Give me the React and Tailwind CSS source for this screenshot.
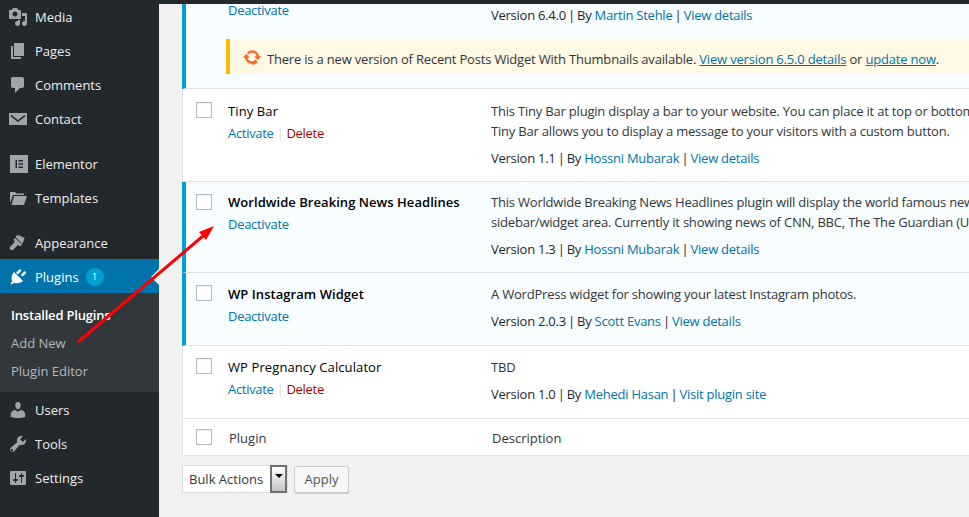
import React from "react";

const P = {
  media: "M13 11V4c0-.55-.45-1-1-1h-1.670L9 1H5L3.670 3H2c-.55 0-1 .45-1 1v7c0 .55.45 1 1 1h10c.55 0 1-.45 1-1zM7 4.500c1.380 0 2.500 1.120 2.500 2.500S8.380 9.500 7 9.500 4.500 8.380 4.500 7 5.620 4.500 7 4.500zM14 6h5v10.500c0 1.380-1.120 2.500-2.500 2.500S14 17.880 14 16.500s1.120-2.500 2.500-2.500c.17 0 .34.020.5.050V9h-3V6zm-4 8.050V13h2v3.500c0 1.380-1.120 2.500-2.500 2.500S7 17.880 7 16.500 8.120 14 9.500 14c.17 0 .34.020.5.050z",
  pages: "M6 15V2h10v13H6zm-1 1h8v2H3V5h2v11z",
  comments: "M5 2h9c1.100 0 2 .9 2 2v7c0 1.100-.9 2-2 2h-2l-5 5v-5H5c-1.100 0-2-.9-2-2V4c0-1.100.9-2 2-2z",
  contact: "M1 4h18v12H1V4zm2.500 2L2.500 7.200 10 13l7.500-5.800L16.500 6 10 11 3.500 6z",
  elementor: "M2 1h18v18H2V1zm5.500 5v8h1.500V6H7.500zm3 0v1.500h4.500V6h-4.500zm0 3.200v1.500h4.500V9.200h-4.500zm0 3.300V14h4.500v-1.500h-4.500z",
  templates: "M2 15V4h5l1.500 1.500H16V7H5L2 15zm1.500 2L6 8h13l-3 9H3.500z",
  appearance: "M14.480 11.060L7.410 3.990l1.500-1.500c.5-.56 2.300-.47 3.510.32 1.210.8 1.430 1.280 2.660 1.510 1.230.22 1.590.17 1.590.17l-2.190 6.570zM13.780 11.760l-.7.700-.7.700-1.400-.7-1.100-.5-4.500 4.500c-.84.84-2.200.84-3.030 0s-.84-2.190 0-3.030l4.500-4.500-.5-1.100-.7-1.400.7-.7.7-.7 7.230 6.730z",
  plugins: "M13.110 4.360L9.870 7.600 8 5.730l3.240-3.240c.35-.34 1.050-.2 1.560.32.52.51.66 1.210.31 1.550zm-8 1.770l.91-1.120 9.010 9.010-1.190.84c-1.530 1.110-3.260 1.390-4.940 1.390-1.260 0-2.160-.1-3.080-.59L3.790 17.500 2.500 16.210l1.840-2.040c-.38-.81-.76-1.730-.76-3.080 0-1.690.4-3.400 1.530-4.960zM18 6.270l-3.240 3.240-1.870-1.870 3.240-3.240c.34-.35 1.040-.21 1.550.31.52.51.66 1.210.32 1.560z",
  users: "M10 9.250c-2.270 0-2.730-3.440-2.730-3.440C7 4.020 7.820 2 9.970 2c2.160 0 2.980 2.020 2.710 3.810 0 0-.41 3.440-2.680 3.440zm0 2.570L12.720 10c2.390 0 4.520 2.330 4.520 4.530v2.490s-3.650 1.130-7.240 1.130c-3.650 0-7.240-1.130-7.240-1.130v-2.490c0-2.250 1.940-4.480 4.470-4.480z",
  tools: "M16.680 9.770c-1.340 1.340-3.300 1.670-4.950.99l-5.410 6.520c-.99.99-2.590.99-3.570 0-.99-.98-.99-2.580 0-3.570l6.520-5.420c-.68-1.650-.35-3.610.99-4.950 1.280-1.280 3.120-1.620 4.720-1.060l-2.890 2.890 2.820 2.820 2.860-2.870c.53 1.590.18 3.400-1.090 4.670zM4.860 17.070c.49-.49.49-1.280 0-1.770-.49-.49-1.280-.49-1.770 0-.49.49-.49 1.280 0 1.770.49.49 1.280.49 1.770 0z",
  settings: "M18 16V4c0-.55-.45-1-1-1H3c-.55 0-1 .45-1 1v12c0 .55.45 1 1 1h14c.55 0 1-.45 1-1zM8 11h1c.55 0 1 .45 1 1s-.45 1-1 1H8v1.500c0 .28-.22.5-.5.5s-.5-.22-.5-.5V13H6c-.55 0-1-.45-1-1s.45-1 1-1h1V5.500c0-.28.22-.5.5-.5s.5.22.5.5V11zm5-2h-1c-.55 0-1-.45-1-1s.45-1 1-1h1V5.500c0-.28.22-.5.5-.5s.5.22.5.5V7h1c.55 0 1 .45 1 1s-.45 1-1 1h-1v5.500c0 .28-.22.5-.5.5s-.5-.22-.5-.5V9z",
  update: "M10.200 3.280c3.530 0 6.430 2.610 6.920 6h2.080l-3.500 4-3.500-4h2.320c-.45-1.970-2.210-3.440-4.320-3.440-1.450 0-2.730.71-3.540 1.780L4.950 5.660C6.230 4.200 8.110 3.280 10.200 3.280zm-.4 13.440c-3.520 0-6.430-2.610-6.920-6H.8l3.500-4c1.170 1.330 2.330 2.670 3.500 4H5.480c.45 1.970 2.210 3.440 4.320 3.440 1.450 0 2.730-.71 3.540-1.780l2.440 2.980c-1.280 1.460-3.160 2.380-5.280 2.360z",
};

function Icon({ name, className }) {
  return (
    <svg viewBox="0 0 20 20" className={className} fill="currentColor" fillRule="evenodd" aria-hidden="true">
      <path d={P[name]} />
    </svg>
  );
}

function MenuItem({ icon, label, active, badge, mt }) {
  return (
    <div
      className={`relative flex h-[34px] items-center ${mt ? "mt-[11px]" : ""} ${active ? "-mt-px bg-[#0073aa] pt-px text-white" : "text-[#eeeeee]"}`}
    >
      <span className={`flex w-[35px] justify-center pl-[1px] ${active ? "text-white" : "text-[#a0a5aa]"}`}>
        <Icon name={icon} className="h-5 w-5" />
      </span>
      <span className="text-[13px] leading-[18px]">{label}</span>
      {badge && (
        <span className="ml-[7px] flex h-[18px] w-[18px] items-center justify-center rounded-full bg-[#00a0d2] text-[9px] text-white">
          {badge}
        </span>
      )}
      {active && (
        <span className="absolute right-0 top-[10px] h-0 w-0 border-y-[8px] border-r-[8px] border-y-transparent border-r-[#f1f1f1]" />
      )}
    </div>
  );
}

function Sidebar() {
  return (
    <aside className="h-full w-[159px] shrink-0 bg-[#23282d]">
      <MenuItem icon="media" label="Media" />
      <MenuItem icon="pages" label="Pages" />
      <MenuItem icon="comments" label="Comments" />
      <MenuItem icon="contact" label="Contact" />
      <MenuItem icon="elementor" label="Elementor" mt />
      <MenuItem icon="templates" label="Templates" />
      <MenuItem icon="appearance" label="Appearance" mt />
      <MenuItem icon="plugins" label="Plugins" active badge="1" />
      <div className="h-[99px] bg-[#32373c] pt-2 text-[13px] leading-[28px]">
        <div className="pl-[11px] font-semibold tracking-[-0.2px] text-white">Installed Plugins</div>
        <div className="pl-[11px] text-[#b4b9be]">Add New</div>
        <div className="pl-[11px] text-[#b4b9be]">Plugin Editor</div>
      </div>
      <div className="h-[1px]" />
      <MenuItem icon="users" label="Users" />
      <MenuItem icon="tools" label="Tools" />
      <MenuItem icon="settings" label="Settings" />
    </aside>
  );
}

function Check() {
  return <span className="block h-4 w-4 border border-[#b4b9be] bg-white shadow-[inset_0_1px_2px_rgba(0,0,0,0.07)]" />;
}

function Sep() {
  return <span className="mx-[-1px]"> | </span>;
}

function Meta({ version, by, link, tight }) {
  return (
    <div className={`whitespace-nowrap tracking-[-0.25px] text-[#23282d] ${tight ? "mt-[7px]" : "mt-2"}`}>
      Version {version}
      <Sep />
      By <a className="text-[#0073aa]">{by}</a>
      <Sep />
      <a className="text-[#0073aa]">{link}</a>
    </div>
  );
}

function Row({ active, name, actions, desc, version, by, link, h, pt, tight, checkPt }) {
  return (
    <div
      className={`flex border-b border-[#e1e1e1] text-[13px] leading-[19.5px] ${
        active ? "border-l-4 border-l-[#00a0d2] bg-[#f7fcfe]" : "border-l border-l-[#e5e5e5] bg-white"
      } ${h} ${pt}`}
    >
      <div className={`shrink-0 ${checkPt || ""} ${active ? "w-[42px] pl-[10px]" : "w-[45px] pl-[13px]"}`}>
        <Check />
      </div>
      <div className="w-[263px] shrink-0">
        <div className={active ? "font-semibold tracking-[0.05px] text-black" : "tracking-[0.1px] text-black"}>{name}</div>
        <div className="mt-[2px] tracking-[-0.3px]">
          {actions === "deactivate" ? (
            <a className="text-[#0073aa]">Deactivate</a>
          ) : (
            <>
              <a className="text-[#0073aa]">Activate</a>
              <span className="mx-[3px] text-[#dddddd]">|</span>
              <a className="text-[#aa0000]">Delete</a>
            </>
          )}
        </div>
      </div>
      <div className="min-w-0 flex-1 overflow-hidden whitespace-nowrap tracking-[-0.2px] text-[#32373c]">
        {desc.map((d) => (
          <div key={d}>{d}</div>
        ))}
        <Meta version={version} by={by} link={link} tight={tight} />
      </div>
    </div>
  );
}

function Table() {
  return (
    <div className="ml-[23px]">
      <div className="h-[85px] overflow-hidden border-b border-[#e1e1e1] border-l-4 border-l-[#00a0d2] bg-[#f7fcfe] text-[13px] leading-[19.5px]">
        <div className="flex h-[35px]">
          <div className="ml-[42px] w-[263px] shrink-0 -translate-y-[3px] tracking-[-0.3px] text-[#0073aa]">Deactivate</div>
          <div className="translate-y-[2px] whitespace-nowrap tracking-[-0.25px] text-[#23282d]">
            Version 6.4.0
            <Sep />
            By <a className="text-[#0073aa]">Martin Stehle</a>
            <Sep />
            <a className="text-[#0073aa]">View details</a>
          </div>
        </div>
        <div className="ml-[40px] flex h-[35px] items-center whitespace-nowrap border-l-4 border-l-[#ffb900] bg-[#fff8e5] pl-[12px] text-[#32373c]">
          <Icon name="update" className="mr-[5px] h-5 w-5 shrink-0 text-[#f56e28]" />
          <span className="pt-[6px] tracking-[-0.19px]">
            There is a new version of Recent Posts Widget With Thumbnails available.{" "}
            <a className="text-[#0073aa] underline">View version 6.5.0 details</a> or{" "}
            <a className="text-[#0073aa] underline">update now</a>.
          </span>
        </div>
      </div>
      <Row
        name="Tiny Bar"
        actions="activate"
        desc={[
          "This Tiny Bar plugin display a bar to your website. You can place it at top or bottom of your website.",
          "Tiny Bar allows you to display a message to your visitors with a custom button.",
        ]}
        version="1.1"
        by="Hossni Mubarak"
        link="View details"
        h="h-[93px]"
        pt="pt-[13px]"
      />
      <Row
        active
        name="Worldwide Breaking News Headlines"
        actions="deactivate"
        desc={[
          "This Worldwide Breaking News Headlines plugin will display the world famous news headlines in your",
          "sidebar/widget area. Currently it showing news of CNN, BBC, The The Guardian (UK) and many more.",
        ]}
        version="1.3"
        by="Hossni Mubarak"
        link="View details"
        h="h-[91px]"
        pt="pt-[11px]"
        checkPt="pt-px"
      />
      <Row
        active
        name="WP Instagram Widget"
        actions="deactivate"
        desc={["A WordPress widget for showing your latest Instagram photos."]}
        version="2.0.3"
        by="Scott Evans"
        link="View details"
        h="h-[73px]"
        pt="pt-[12px]"
        tight
      />
      <Row
        name="WP Pregnancy Calculator"
        actions="activate"
        desc={["TBD"]}
        version="1.0"
        by="Mehedi Hasan"
        link="Visit plugin site"
        h="h-[73px]"
        pt="pt-[12px]"
        tight
      />
      <div className="flex h-[37px] items-center border-b border-l border-[#e5e5e5] bg-white text-[13px] text-[#32373c]">
        <div className="w-[46px] shrink-0 pl-[13px]">
          <Check />
        </div>
        <div className="w-[263px] shrink-0 pt-[4px]">Plugin</div>
        <div className="pt-[4px]">Description</div>
      </div>
    </div>
  );
}

function BulkBar() {
  return (
    <div className="ml-[23px] mt-[9px] flex items-start gap-[6px] text-[13px]">
      <div className="flex h-[28px] w-[106px] items-center justify-between border border-[#dddddd] bg-white pl-[6px] text-[#32373c]">
        <span className="pt-px">Bulk Actions</span>
        <span className="flex h-[28px] w-[17px] shrink-0 items-start justify-center border-2 border-[#707070] bg-gradient-to-b from-white to-[#c4c4c4] pt-[7px]">
          <span className="h-0 w-0 border-x-[4px] border-t-[4px] border-x-transparent border-t-black" />
        </span>
      </div>
      <button className="mt-px h-[27px] w-[55px] rounded-[3px] border border-[#cccccc] bg-[#f7f7f7] text-[#555555] shadow-[0_1px_0_#cccccc]">
        Apply
      </button>
    </div>
  );
}

export default function App() {
  return (
    <div
      className="relative flex h-[517px] w-[969px] overflow-hidden bg-[#f1f1f1]"
      style={{ fontFamily: '"Open Sans", "Noto Sans", sans-serif' }}
    >
      <Sidebar />
      <main className="min-w-0 flex-1">
        <div className="h-[4px] bg-[#23282d]" />
        <Table />
        <BulkBar />
      </main>
      <svg className="pointer-events-none absolute left-0 top-0 h-[517px] w-[969px]" viewBox="0 0 969 517" aria-hidden="true">
        <line x1="78" y1="342" x2="203" y2="236" stroke="#ff0000" strokeWidth="3" />
        <polygon points="214,226 199,232 206,240" fill="#ff0000" />
      </svg>
    </div>
  );
}
